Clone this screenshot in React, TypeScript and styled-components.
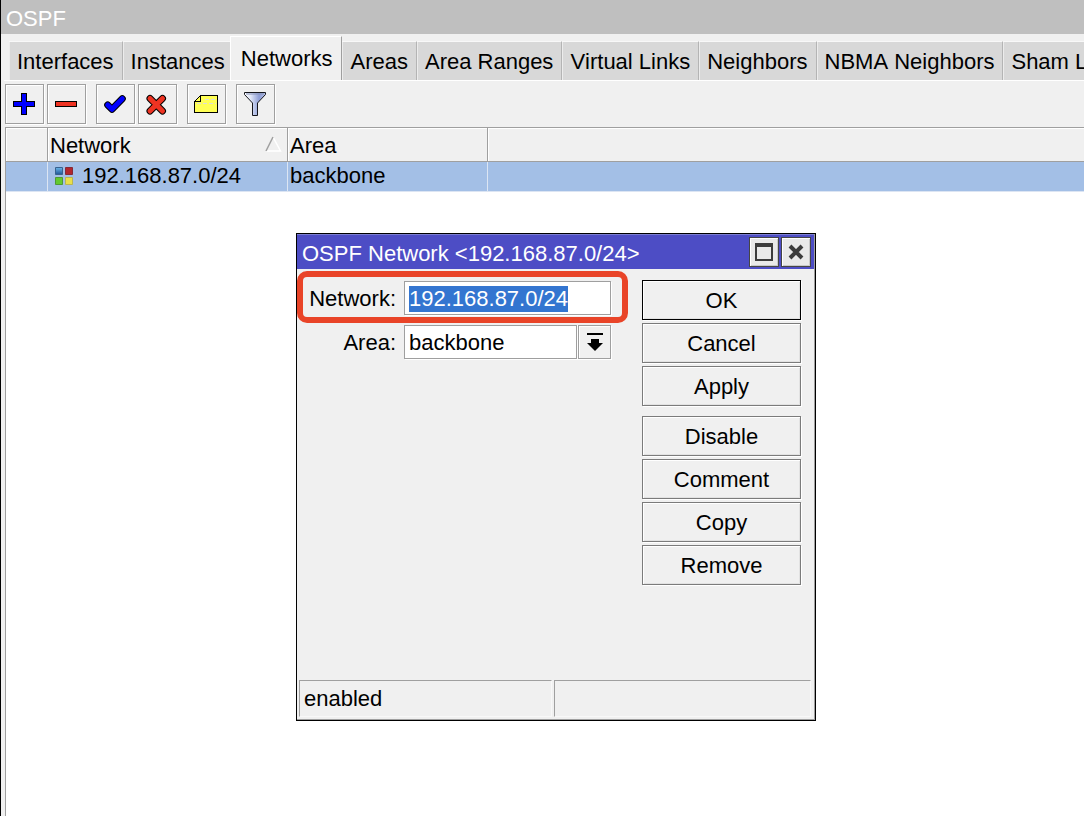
import React, { useEffect, useRef } from "react";
import styled, { createGlobalStyle, css } from "styled-components";

const Global = createGlobalStyle`
  *, *::before, *::after { box-sizing: border-box; }
  html, body { margin: 0; background: #fff; }
  body, button, input, select, table {
    font-family: "Liberation Sans", Arial, sans-serif;
    font-size: 22px;
    line-height: 26px;
    color: #000;
    font-kerning: none;
  }
`;

const Screen = styled.div`
  position: relative;
  min-height: 100vh;
  display: flex;
  flex-direction: column;
  border-left: 1px solid #000;
  background: #f0f0f0;
  overflow: hidden;
`;

const TitleBar = styled.header`
  height: 34px;
  padding: 6px 5px 2px;
  background: #bfbfbf;
  color: #fff;
`;

const Tabs = styled.nav`
  display: flex;
  align-items: flex-end;
  height: 47px;
  margin: 0 0 0 3px;
  padding: 2px 0 0 5px;
  border-bottom: 1px solid #fff;
  overflow: hidden;
`;

const Tab = styled.button<{ $active?: boolean }>`
  flex: none;
  height: 39px;
  padding: 1px 8px 0;
  border: 0;
  border-top: 1px solid #f8f8f8;
  border-right: 1px solid #b4b4b4;
  background: #d8d8d8;
  box-shadow: inset 1px 0 #ececec;
  white-space: nowrap;
  ${(p) =>
    p.$active &&
    css`
      height: 44px;
      margin-left: -4px;
      padding: 0 9px 0 10px;
      border-left: 1px solid #fff;
      border-top-color: #fff;
      border-right-color: #9f9f9f;
      background: #f0f0f0;
      box-shadow: none;
      z-index: 1;
    `}
`;

const Toolbar = styled.div`
  display: flex;
  gap: 10px;
  padding: 3px 4px;
`;

const ToolGroup = styled.div`
  display: flex;
  gap: 3px;
`;

const ToolButton = styled.button`
  display: flex;
  align-items: center;
  justify-content: center;
  width: 39px;
  height: 40px;
  padding: 0 1px 0 0;
  border: 1px solid #9f9f9f;
  background: #f0f0f0;
  box-shadow: inset 1px 1px #fff, 1px 1px #fff;
`;

const Sheet = styled.main`
  flex: 1;
  margin-left: 4px;
  border: 1px solid #9f9f9f;
  border-width: 1px 0 0 1px;
  background: #fff;
`;

const Grid = styled.table`
  width: 100%;
  table-layout: fixed;
  border-collapse: separate;
  border-spacing: 0;
`;

const HeadCell = styled.th`
  height: 34px;
  padding: 2px 2px 0;
  border-right: 1px solid #9f9f9f;
  border-bottom: 1px solid #9f9f9f;
  background: #f0f0f0;
  box-shadow: inset 1px 1px #fff;
  font-weight: 400;
  text-align: left;
  &:last-child { border-right: 0; }
`;

const Cell = styled.td`
  height: 30px;
  padding: 0 2px 1px;
  border-right: 1px solid #dce5f3;
  border-bottom: 1px solid #dce5f3;
  background: #a3bfe6;
  &:last-child { border-right: 0; }
`;

const Spread = styled.div`
  display: flex;
  align-items: flex-start;
  justify-content: space-between;
  padding-right: 3px;
  svg { margin-top: 3px; }
`;

const Entry = styled.div`
  display: flex;
  align-items: center;
  gap: 8px;
  padding-left: 5px;
`;

const Dialog = styled.section`
  position: absolute;
  left: 295px;
  top: 233px;
  width: 520px;
  height: 488px;
  display: flex;
  flex-direction: column;
  border: 1px solid #000;
  background: #f0f0f0;
  box-shadow: inset -1px -1px #9f9f9f;
`;

const DialogTitle = styled.header`
  display: flex;
  align-items: center;
  justify-content: space-between;
  height: 35px;
  margin-right: 1px;
  padding: 0 3px 0 5px;
  border-top: 1px solid #7c7ed2;
  background: #4d4dc5;
  color: #fff;
`;

const DialogName = styled.h2`
  margin: 0;
  padding-top: 3px;
  font-size: 22px;
  font-weight: 400;
`;

const WindowButtons = styled.div`
  display: flex;
  gap: 2px;
`;

const WindowButton = styled.button`
  display: flex;
  align-items: center;
  justify-content: center;
  width: 30px;
  height: 30px;
  padding: 0;
  border: 1px solid #454545;
  background: #e9e9e9;
  box-shadow: inset 1px 1px #fff, inset -1px -1px #c8c8c8;
`;

const DialogBody = styled.div`
  flex: 1;
  display: flex;
  justify-content: space-between;
  padding: 11px 14px 0 7px;
`;

const Form = styled.form`
  display: flex;
  flex-direction: column;
  gap: 10px;
  padding-top: 1px;
`;

const Field = styled.div<{ $marked?: boolean }>`
  position: relative;
  display: grid;
  grid-template-columns: 92px 207px;
  column-gap: 8px;
  align-items: center;
  ${(p) =>
    p.$marked &&
    css`
      &::after {
        content: "";
        position: absolute;
        inset: -10px -17px -8px -7px;
        border: 6px solid #e94428;
        border-radius: 10px;
        pointer-events: none;
      }
    `}
`;

const Label = styled.label`
  padding-top: 2px;
  text-align: right;
`;

const TextBox = styled.input`
  width: 100%;
  height: 34px;
  padding: 1px 4px 0;
  line-height: 30px;
  border: 1px solid #9f9f9f;
  border-radius: 0;
  background: #fff;
  box-shadow: 1px 1px #fff;
  outline: 0;
  &::selection { background: #3375d0; color: #fff; }
`;

const Combo = styled.div`
  display: grid;
  grid-template-columns: 173px 1px 33px;
  height: 34px;
`;

const Select = styled.select`
  grid-area: 1 / 1 / 2 / 4;
  appearance: none;
  padding: 2px 38px 0 4px;
  border: 1px solid #9f9f9f;
  border-radius: 0;
  background: #fff;
  box-shadow: 1px 1px #fff;
  outline: 0;
`;

const ComboArrow = styled.span`
  grid-area: 1 / 3 / 2 / 4;
  display: flex;
  align-items: center;
  justify-content: center;
  border: 1px solid #9f9f9f;
  background: #f0f0f0;
  box-shadow: inset 1px 1px #fff, -1px 0 #fff, -2px 0 #9f9f9f;
  pointer-events: none;
`;

const Actions = styled.div`
  display: flex;
  flex-direction: column;
  gap: 10px;
  width: 159px;
`;

const ActionGroup = styled.div`
  display: flex;
  flex-direction: column;
  gap: 3px;
`;

const ActionButton = styled.button<{ $primary?: boolean }>`
  height: 40px;
  padding: 1px 0 0;
  border: 1px solid ${(p) => (p.$primary ? "#000" : "#7b7b7b")};
  background: #f0f0f0;
  box-shadow: inset 1px 1px #fff, inset -1px -1px #e2e2e2, 1px 1px #fff;
`;

const StatusBar = styled.footer`
  display: grid;
  grid-template-columns: 253fr 258fr;
  gap: 2px;
  padding: 0 4px 3px 2px;
`;

const Status = styled.div`
  height: 37px;
  padding: 5px 4px;
  border: 1px solid #9f9f9f;
  border-right-color: #f8f8f8;
  border-bottom-color: #f8f8f8;
`;

const PlusIcon = () => (
  <svg width="22" height="22" viewBox="0 0 22 22" shapeRendering="crispEdges">
    <path d="M8.5.5h5v8h8v5h-8v8h-5v-8h-8v-5h8z" fill="#0000ff" stroke="#000" />
  </svg>
);
const MinusIcon = () => (
  <svg width="22" height="22" viewBox="0 0 22 22" shapeRendering="crispEdges">
    <path d="M.5 8.5h21v5H.5z" fill="#ee3322" stroke="#000" />
  </svg>
);
const CheckIcon = () => (
  <svg width="22" height="22" viewBox="0 0 22 22" fill="none" strokeLinejoin="round" strokeLinecap="round">
    <path d="M3.700 12 8 16.300 18.300 5.700" stroke="#000" strokeWidth="7" />
    <path d="M3.700 12 8 16.300 18.300 5.700" stroke="#0000ff" strokeWidth="5" />
  </svg>
);
const CrossIcon = () => (
  <svg width="22" height="22" viewBox="0 0 22 22" fill="none" strokeLinecap="round">
    <path d="M4 5.500 16.500 18M16.500 5.500 4 18" stroke="#000" strokeWidth="7" />
    <path d="M4 5.500 16.500 18M16.500 5.500 4 18" stroke="#ee3322" strokeWidth="5" />
  </svg>
);
const NoteIcon = () => (
  <svg width="24" height="18" viewBox="0 0 24 18" shapeRendering="crispEdges">
    <path d="M6.500.5h17v17H.5v-11z" fill="#ffff55" stroke="#000" />
    <path d="M.5 6.500h6v-6" fill="#ffff55" stroke="#000" />
    <path d="M11 4.500h11M3 8.500h19" stroke="#dcdcdc" strokeDasharray="4 2" />
  </svg>
);
const FunnelIcon = () => (
  <svg width="22" height="24" viewBox="0 0 22 24">
    <defs>
      <linearGradient id="funnel">
        <stop offset="0" stopColor="#fff" />
        <stop offset="0.300" stopColor="#dfe6f8" />
        <stop offset="0.700" stopColor="#8d9dd6" />
        <stop offset="1" stopColor="#b9c3ea" />
      </linearGradient>
    </defs>
    <path d="M.5.5h21v2L13.500 11v12.500h-5V11L.5 2.500z" fill="url(#funnel)" stroke="#15161c" />
    <path d="M2 2h18" stroke="#8590b5" />
  </svg>
);
const NetworkIcon = () => (
  <svg width="19" height="18" viewBox="0 0 19 18">
    <defs>
      <linearGradient id="blueTile" x2="0" y2="1">
        <stop stopColor="#6cb7ea" />
        <stop offset="1" stopColor="#1f5596" />
      </linearGradient>
    </defs>
    <path d="M.5.5h7v7h-7z" fill="url(#blueTile)" stroke="#39628f" />
    <path d="M10.500.5h7v7h-7z" fill="#b3262c" stroke="#842a38" />
    <path d="M.5 10.500h7v7h-7z" fill="#63c92f" stroke="#4f9935" />
    <path d="M10.500 10.500h7v7h-7z" fill="#e8df4b" stroke="#b9b552" />
  </svg>
);
const SortIcon = () => (
  <svg width="17" height="16" viewBox="0 0 17 16">
    <path d="M8 1l7.500 14H1" fill="none" stroke="#fff" strokeWidth="1.500" />
    <path d="M1 15 8 1" stroke="#9f9f9f" strokeWidth="1.500" />
  </svg>
);
const DropIcon = () => (
  <svg width="16" height="18" viewBox="0 0 16 18">
    <path d="M0 0h16v2H0zM4 6h8v4h4l-8 8-8-8h4z" />
  </svg>
);
const MaximizeIcon = () => (
  <svg width="18" height="18" viewBox="0 0 18 18" shapeRendering="crispEdges">
    <path d="M1 2h16v15H1z" fill="none" stroke="#3c3c3c" strokeWidth="2" />
    <path d="M0 2h18" stroke="#3c3c3c" strokeWidth="4" />
  </svg>
);
const CloseIcon = () => (
  <svg width="16" height="16" viewBox="0 0 16 16">
    <path d="M2 2l12 12M14 2 2 14" stroke="#3c3c3c" strokeWidth="4" />
  </svg>
);

const tabs = ["Interfaces", "Instances", "Networks", "Areas", "Area Ranges", "Virtual Links", "Neighbors", "NBMA Neighbors", "Sham Links"];

const tools = [
  [{ name: "Add", icon: <PlusIcon /> }, { name: "Remove entry", icon: <MinusIcon /> }],
  [{ name: "Enable", icon: <CheckIcon /> }, { name: "Disable entry", icon: <CrossIcon /> }],
  [{ name: "Comment entry", icon: <NoteIcon /> }],
  [{ name: "Filter", icon: <FunnelIcon /> }],
];

const actions = [
  ["OK", "Cancel", "Apply"],
  ["Disable", "Comment", "Copy", "Remove"],
];

export default function App() {
  const network = useRef<HTMLInputElement>(null);
  useEffect(() => {
    network.current?.focus();
    network.current?.select();
  }, []);

  return (
    <Screen>
      <Global />
      <TitleBar>OSPF</TitleBar>
      <Tabs>
        {tabs.map((t) => (
          <Tab key={t} $active={t === "Networks"}>{t}</Tab>
        ))}
      </Tabs>
      <Toolbar>
        {tools.map((group, i) => (
          <ToolGroup key={i}>
            {group.map((t) => (
              <ToolButton key={t.name} aria-label={t.name}>{t.icon}</ToolButton>
            ))}
          </ToolGroup>
        ))}
      </Toolbar>
      <Sheet>
        <Grid>
          <colgroup>
            <col width="42" />
            <col width="240" />
            <col width="200" />
            <col />
          </colgroup>
          <thead>
            <tr>
              <HeadCell />
              <HeadCell><Spread>Network<SortIcon /></Spread></HeadCell>
              <HeadCell>Area</HeadCell>
              <HeadCell />
            </tr>
          </thead>
          <tbody>
            <tr>
              <Cell />
              <Cell><Entry><NetworkIcon />192.168.87.0/24</Entry></Cell>
              <Cell>backbone</Cell>
              <Cell />
            </tr>
          </tbody>
        </Grid>
      </Sheet>
      <Dialog role="dialog" aria-labelledby="dialog-title">
        <DialogTitle>
          <DialogName id="dialog-title">OSPF Network &lt;192.168.87.0/24&gt;</DialogName>
          <WindowButtons>
            <WindowButton aria-label="Maximize"><MaximizeIcon /></WindowButton>
            <WindowButton aria-label="Close"><CloseIcon /></WindowButton>
          </WindowButtons>
        </DialogTitle>
        <DialogBody>
          <Form>
            <Field $marked>
              <Label htmlFor="network">Network:</Label>
              <TextBox id="network" ref={network} defaultValue="192.168.87.0/24" />
            </Field>
            <Field>
              <Label htmlFor="area">Area:</Label>
              <Combo>
                <Select id="area" defaultValue="backbone">
                  <option>backbone</option>
                </Select>
                <ComboArrow><DropIcon /></ComboArrow>
              </Combo>
            </Field>
          </Form>
          <Actions>
            {actions.map((group, i) => (
              <ActionGroup key={i}>
                {group.map((a) => (
                  <ActionButton key={a} $primary={a === "OK"}>{a}</ActionButton>
                ))}
              </ActionGroup>
            ))}
          </Actions>
        </DialogBody>
        <StatusBar>
          <Status>enabled</Status>
          <Status />
        </StatusBar>
      </Dialog>
    </Screen>
  );
}
